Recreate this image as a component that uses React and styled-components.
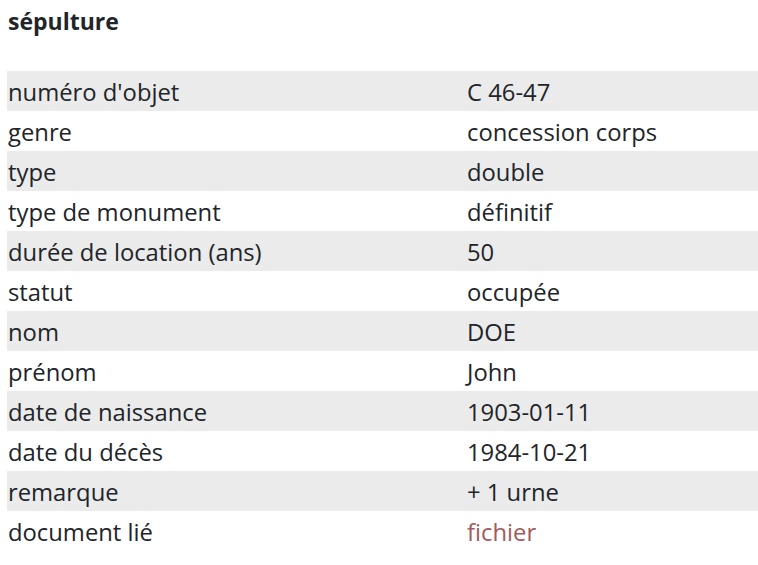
import React from "react";
import styled, { createGlobalStyle } from "styled-components";

const GlobalStyle = createGlobalStyle`
  html, body {
    margin: 0;
    padding: 0;
    background: #fff;
    overflow: hidden;
  }
  body {
    font-family: "Open Sans", "Noto Sans", sans-serif;
    color: #212529;
  }
`;

const Page = styled.div`
  padding: 6px 0 0 7px;
`;

const Title = styled.h4`
  margin: 0 0 35px 1px;
  font-size: 23px;
  font-weight: 700;
  line-height: 30px;
`;

const Table = styled.div`
  display: grid;
  grid-template-columns: 459px 1fr;
  width: 751px;
`;

const Cell = styled.div`
  box-sizing: border-box;
  height: 40px;
  padding: 3px 0 0 1px;
  line-height: 37px;
  font-size: 23.8px;
  background: ${(p) => (p.$shade ? "#ebebeb" : "transparent")};
  white-space: nowrap;
`;

const FileLink = styled.a`
  color: #a35a5a;
  text-decoration: none;
`;

const rows = [
  ["numéro d'objet", "C 46-47"],
  ["genre", "concession corps"],
  ["type", "double"],
  ["type de monument", "définitif"],
  ["durée de location (ans)", "50"],
  ["statut", "occupée"],
  ["nom", "DOE"],
  ["prénom", "John"],
  ["date de naissance", "1903-01-11"],
  ["date du décès", "1984-10-21"],
  ["remarque", "+ 1 urne"],
  ["document lié", null],
];

export default function App() {
  return (
    <Page>
      <GlobalStyle />
      <Title>sépulture</Title>
      <Table>
        {rows.map(([label, value], i) => (
          <React.Fragment key={label}>
            <Cell $shade={i % 2 === 0}>{label}</Cell>
            <Cell $shade={i % 2 === 0}>
              {value ?? <FileLink href="#">fichier</FileLink>}
            </Cell>
          </React.Fragment>
        ))}
      </Table>
    </Page>
  );
}
